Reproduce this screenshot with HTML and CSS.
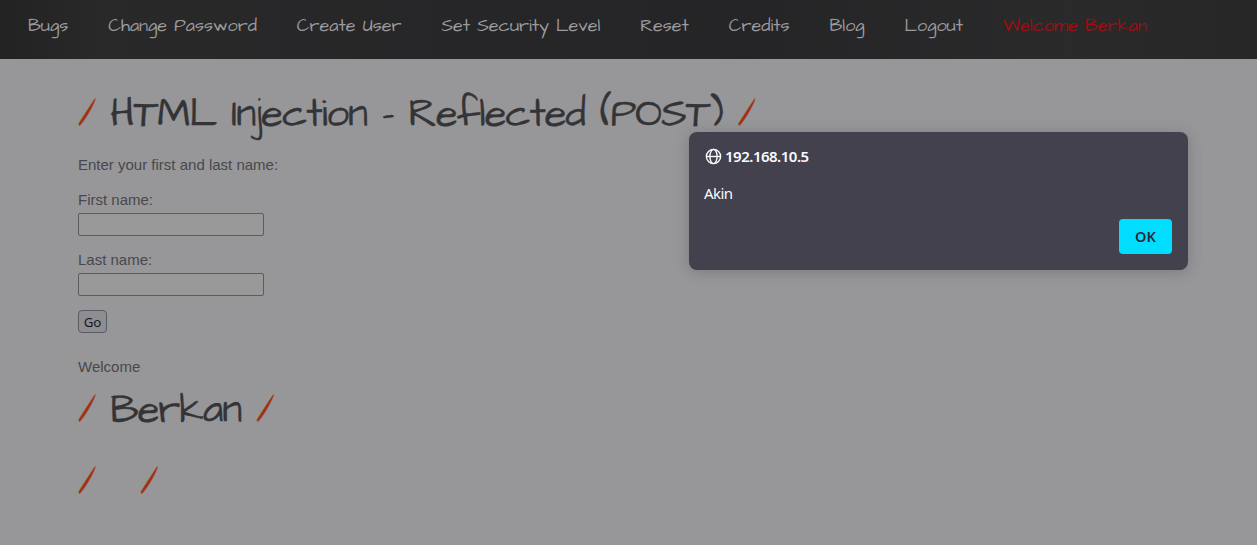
FILE: index.html
```
<!DOCTYPE html>
<html lang="en">
<head>
<meta charset="utf-8">
<title>HTML Injection - Reflected (POST)</title>
<link rel="stylesheet" href="styles.css">
</head>
<body>
<nav class="menu">
  <span>Bugs</span>
  <span>Change Password</span>
  <span>Create User</span>
  <span>Set Security Level</span>
  <span>Reset</span>
  <span>Credits</span>
  <span>Blog</span>
  <span>Logout</span>
  <span class="user">Welcome Berkan</span>
</nav>
<main class="main">
  <h1 class="title"><i class="slash">/</i> HTML Injection - Reflected (POST) <i class="slash">/</i></h1>
  <p class="intro">Enter your first and last name:</p>
  <form class="form">
    <label class="field">First name:<input class="input" type="text"></label>
    <label class="field">Last name:<input class="input" type="text"></label>
    <button class="go" type="button">Go</button>
  </form>
  <p class="welcome">Welcome</p>
  <h1 class="title name"><i class="slash">/</i> Berkan <i class="slash">/</i></h1>
  <h1 class="title empty"><i class="slash">/</i> &nbsp; <i class="slash">/</i></h1>
</main>
<section class="dialog" role="alertdialog">
  <div class="origin">
    <svg class="globe" viewBox="0 0 16 16" fill="none" stroke="#fbfbfe" stroke-width="1.3"><circle cx="8" cy="8" r="6.7"/><ellipse cx="8" cy="8" rx="3.4" ry="6.7"/><path d="M1.3 8h13.4"/></svg>
    <span class="host">192.168.10.5</span>
  </div>
  <p class="message">Akin</p>
  <button class="ok" type="button">OK</button>
</section>
</body>
</html>
```
FILE: styles.css
```
* { box-sizing: border-box; }
body {
  margin: 0;
  height: 545px;
  overflow: hidden;
  background: #979799;
  color: #48484b;
  font: 15px/20px "Liberation Sans", Arial, sans-serif;
}
.menu {
  display: flex;
  gap: 40px;
  height: 59px;
  padding: 14px 0 0 28px;
  background: linear-gradient(90deg, #222223, #29292a 8%, #262628 40%, #252527 60%, #2a2a2b 85%, #272728);
  color: #9b9b9d;
  font: 400 18px/24px "Architects Daughter", cursive;
  white-space: nowrap;
}
.menu span { flex: none; }
.menu .user { color: #9e0d12; }
.main { padding: 32px 0 0 78px; }
.title {
  height: 48px;
  margin: 0;
  color: #343437;
  font: 400 40px/48px "Architects Daughter", cursive;
  letter-spacing: -1px;
  white-space: nowrap;
  -webkit-text-stroke: .3px;
}
.slash {
  color: #a03213;
  font-style: normal;
}
.intro { margin: 16px 0 0; }
.form { margin-top: 15px; }
.field { display: block; width: 186px; height: 60px; }
.input {
  display: block;
  width: 186px;
  height: 23px;
  margin-top: 3px;
  border: 1px solid #5b5a65;
  border-radius: 2px;
  background: #99999a;
}
.go {
  display: block;
  width: 29px;
  height: 23px;
  padding: 0;
  border: 1px solid #5b5a65;
  border-radius: 4px;
  background: #8e8e92;
  color: #17171a;
  font: 13.3px/20px "Noto Sans", sans-serif;
}
.welcome { margin: 24px 0 0; }
.name { margin-top: 10px; }
.empty { margin-top: 24px; }
.dialog {
  position: absolute;
  left: 689px;
  top: 132px;
  width: 499px;
  height: 138px;
  padding: 16px;
  display: flex;
  flex-direction: column;
  border-radius: 8px;
  background: #42414d;
  box-shadow: 0 2px 14px rgba(58, 57, 68, .3);
  color: #fbfbfe;
  font: 15px/18px "Noto Sans", sans-serif;
  font-stretch: 90%;
}
.origin { display: flex; align-items: center; gap: 3px; height: 17px; }
.globe { width: 17px; height: 17px; }
.host { margin-top: -2px; font-weight: 600; letter-spacing: -.5px; }
.message { margin: 19px 0 0 -1px; letter-spacing: -.6px; }
.ok {
  align-self: flex-end;
  width: 53px;
  height: 35px;
  margin-top: 17px;
  padding: 0 0 2px;
  border: 0;
  border-radius: 4px;
  background: #00ddff;
  color: #2b2a33;
  font: 600 14.5px/20px "Noto Sans", sans-serif;
}
```
